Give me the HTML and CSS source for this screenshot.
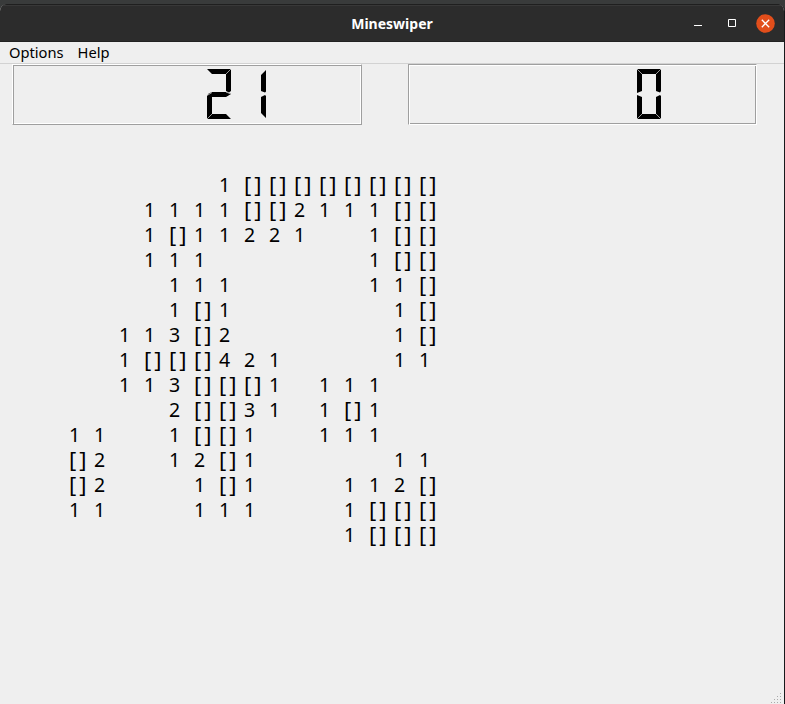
FILE: index.html
```html
<!DOCTYPE html>
<html lang="en">
<head>
<meta charset="utf-8">
<title>Mineswiper</title>
<link rel="stylesheet" href="styles.css">
</head>
<body>
<div class="window">
  <header class="titlebar">
    <h1 class="title">Mineswiper</h1>
    <div class="controls">
      <svg class="minimize" width="8" height="8" viewBox="0 0 8 8"><path d="M0 6.5h8" stroke="#fff"/></svg>
      <svg class="maximize" width="8" height="8" viewBox="0 0 8 8"><path d="M.5.5h7v7h-7z" fill="none" stroke="#fff"/></svg>
      <svg class="close" width="19" height="19" viewBox="0 0 19 19"><circle cx="9.5" cy="9.5" r="9.3" fill="#e24e1b"/><path d="M5.8 5.8l7.4 7.4M13.2 5.8l-7.4 7.4" stroke="#fff" stroke-width="1.3"/></svg>
    </div>
  </header>
  <nav class="menubar"><span class="menu-options">Options</span><span class="menu-help">Help</span></nav>
  <main class="content">
    <div class="counters">
      <div class="lcd raised">
        <svg class="digit" width="24" height="50" viewBox="0 0 24 50">
          <path d="M0 0h24l-5 5H5zM24 0v22l-2 1.5-3-1.5V5zM5 23h14l5 2-5 3H5l-4-1.5V25zM0 26l5 2v17l-5 5zM0 50l5-5h14l5 5z"/>
          <path class="seam" d="M24 0l-5 5M0 50l5-5M0 26.5l5-3M19 23l5 2"/>
        </svg>
        <svg class="digit" width="24" height="50" viewBox="0 0 24 50">
          <path d="M24 1v21.500l-1 1-4-1.500V6zM19 28l4-2 1 1v22l-5-5z"/>
        </svg>
      </div>
      <div class="lcd sunken">
        <svg class="digit" width="24" height="50" viewBox="0 0 24 50">
          <path d="M0 0h24v22l-1 1.500-4-1.500V5H5v17l-5 2zM0 26l5 2v17h14V28l4-2 1 1v23H0z"/>
          <path class="seam" d="M0 0l5 5M24 0l-5 5M0 50l5-5M24 50l-5-5"/>
        </svg>
      </div>
    </div>
    <div class="field" id="field"></div>
  </main>
  <svg class="grip" width="11" height="11" viewBox="0 0 11 11"><path d="M9 .5h1M6 3.500h1M9 3.500h1M3 6.500h1M6 6.500h1M9 6.500h1M0 9.500h1M3 9.500h1M6 9.500h1M9 9.500h1" stroke="#aaa"/></svg>
</div>
<script src="board.js"></script>
</body>
</html>
```

FILE: styles.css
```css
* { box-sizing: border-box; }
body {
  margin: 0;
  height: 704px;
  overflow: hidden;
  padding-top: 4px;
  background: #393b3b;
  font-family: "Noto Sans", sans-serif;
  color: #000;
}
.window {
  position: relative;
  height: 700px;
  background: #efefef;
  border-right: 1px solid #17191b;
  border-radius: 7px 7px 0 0;
  overflow: hidden;
}
.titlebar {
  height: 38px;
  display: grid;
  grid-template-columns: 1fr auto 1fr;
  align-items: center;
  background: #2c2c2c;
  border-top: 1px solid #1f1f1f;
  border-bottom: 1px solid #222;
  box-shadow: inset 0 1px #383838;
}
.title {
  grid-column: 2;
  margin: 2px 0 0;
  font: bold 14px/20px "Noto Sans", sans-serif;
  color: #fff;
}
.controls {
  display: flex;
  justify-content: flex-end;
  align-items: center;
  padding-right: 9px;
}
.maximize { margin-left: 26px; }
.close { margin-left: 20px; }
.menubar {
  height: 22px;
  border-bottom: 1px solid #d2d2d2;
  padding-left: 9px;
  display: flex;
  gap: 14px;
  font-size: 14.7px;
  line-height: 20px;
}
.counters {
  display: flex;
  gap: 46px;
  padding-left: 12px;
}
.lcd {
  height: 61px;
  display: flex;
  justify-content: flex-end;
  gap: 11px;
  padding: 4px 94px 0 0;
  border: 1px solid;
}
.raised {
  width: 350px;
  padding-right: 95px;
  border-color: #fff #9f9f9f #9f9f9f #fff;
  box-shadow: inset 1px 1px #9f9f9f, inset -1px -1px #fff;
}
.sunken {
  width: 349px;
  padding-right: 95px;
  border-color: #9f9f9f #fff #fff #9f9f9f;
  box-shadow: inset 1px 1px #fff, inset -1px -1px #9f9f9f;
}
.digit { display: block; }
.seam { fill: none; stroke: #aaa; stroke-width: .9; }
.field {
  display: grid;
  grid-template-columns: repeat(15, 25px);
  grid-auto-rows: 25px;
  margin: 47px 0 0 69px;
}
.cell {
  font-size: 19.5px;
  line-height: 25px;
  white-space: pre;
}
.covered {
  font-size: 22px;
  line-height: 24px;
  letter-spacing: 3px;
}
.grip {
  position: absolute;
  right: 2px;
  bottom: 0;
}
```

FILE: board.js
```js
// One string per row: digits are neighbour counts, * is a covered cell.
const rows = [
  "      1********",
  "   1111**2111**",
  "   1*11221  1**",
  "   111      1**",
  "    111     11*",
  "    1*1      1*",
  "  113*2      1*",
  "  1***421    11",
  "  113***1 111  ",
  "    2**31 1*1  ",
  "11  1**1  111  ",
  "*2  12*1     11",
  "*2   1*1   112*",
  "11   111   1***",
  "           1***"
];
const field = document.getElementById("field");
for (const row of rows) {
  for (const value of row) {
    const cell = document.createElement("div");
    cell.className = "cell";
    if (value === "*") {
      cell.classList.add("covered");
      cell.textContent = "[]";
    } else {
      cell.textContent = value;
    }
    field.append(cell);
  }
}
```
